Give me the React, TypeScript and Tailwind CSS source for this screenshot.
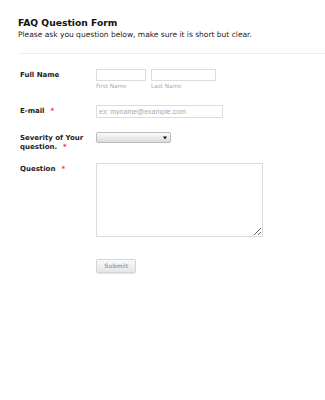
import React from "react";

export default function App() {
  const label = "text-[7px] font-bold text-[#222] leading-[12px]";
  const star = <span className="text-[#e33] ml-[6px]">*</span>;
  return (
    <div className="w-[325px] h-[400px] bg-white overflow-hidden" style={{ fontFamily: '"DejaVu Sans", Verdana, sans-serif' }}>
      <div className="pl-[18px] pt-[17px]">
        <h1 className="text-[9.2px] font-bold text-[#111] leading-[12px]">FAQ Question Form</h1>
        <p className="text-[7.5px] text-[#222] leading-[10px] mt-[1px]">Please ask you question below, make sure it is short but clear.</p>
        <div className="h-px bg-[#eee] mt-[13px]" />
      </div>
      <div className="pl-[20px] pt-[15px] flex flex-col">
        <div className="flex">
          <div className={`w-[76px] ${label}`}>Full Name</div>
          <div className="flex gap-[5px]">
            <div className="flex flex-col">
              <input className="w-[50px] h-[12px] border border-[#dcdcdc] outline-none" />
              <span className="text-[5.7px] text-[#aaa] leading-[8px] mt-[1px]">First Name</span>
            </div>
            <div className="flex flex-col">
              <input className="w-[65px] h-[12px] border border-[#dcdcdc] outline-none" />
              <span className="text-[5.7px] text-[#aaa] leading-[8px] mt-[1px]">Last Name</span>
            </div>
          </div>
        </div>
        <div className="flex mt-[15px]">
          <div className={`w-[76px] ${label} leading-[13px]`}>E-mail{star}</div>
          <input
            placeholder="ex: myname@example.com"
            className="w-[127px] h-[13px] border border-[#dcdcdc] outline-none px-[2px] text-[7px] placeholder:text-[#aaa]"
            style={{ fontFamily: '"Liberation Sans", Arial, sans-serif' }}
          />
        </div>
        <div className="flex mt-[14px]">
          <div className={`w-[76px] text-[7px] font-bold text-[#222] leading-[9px] mt-[1.5px]`}>
            Severity of Your<br />question.{star}
          </div>
          <div className="w-[75px] h-[11px] border border-[#bbb] rounded-[2px] bg-gradient-to-b from-[#fafafa] to-[#dcdcdc] flex items-center justify-end pr-[3px]">
            <svg width="4" height="4" viewBox="0 0 4 4"><path d="M0 0.5h4L2 3.5z" fill="#111" /></svg>
          </div>
        </div>
        <div className="flex mt-[11.5px]">
          <div className={`w-[76px] ${label}`}>Question{star}</div>
          <textarea className="w-[167px] h-[74px] border border-[#dcdcdc] outline-none" />
        </div>
        <div className="flex mt-[22px]">
          <div className="w-[76px]" />
          <button className="w-[40px] h-[14px] border border-[#d5d5d5] rounded-[2px] bg-gradient-to-b from-[#fafafa] to-[#e6e6e6] shadow-[0_1px_1px_rgba(0,0,0,0.1)] text-[6px] font-bold text-[#aaa] leading-none">
            Submit
          </button>
        </div>
      </div>
    </div>
  );
}
